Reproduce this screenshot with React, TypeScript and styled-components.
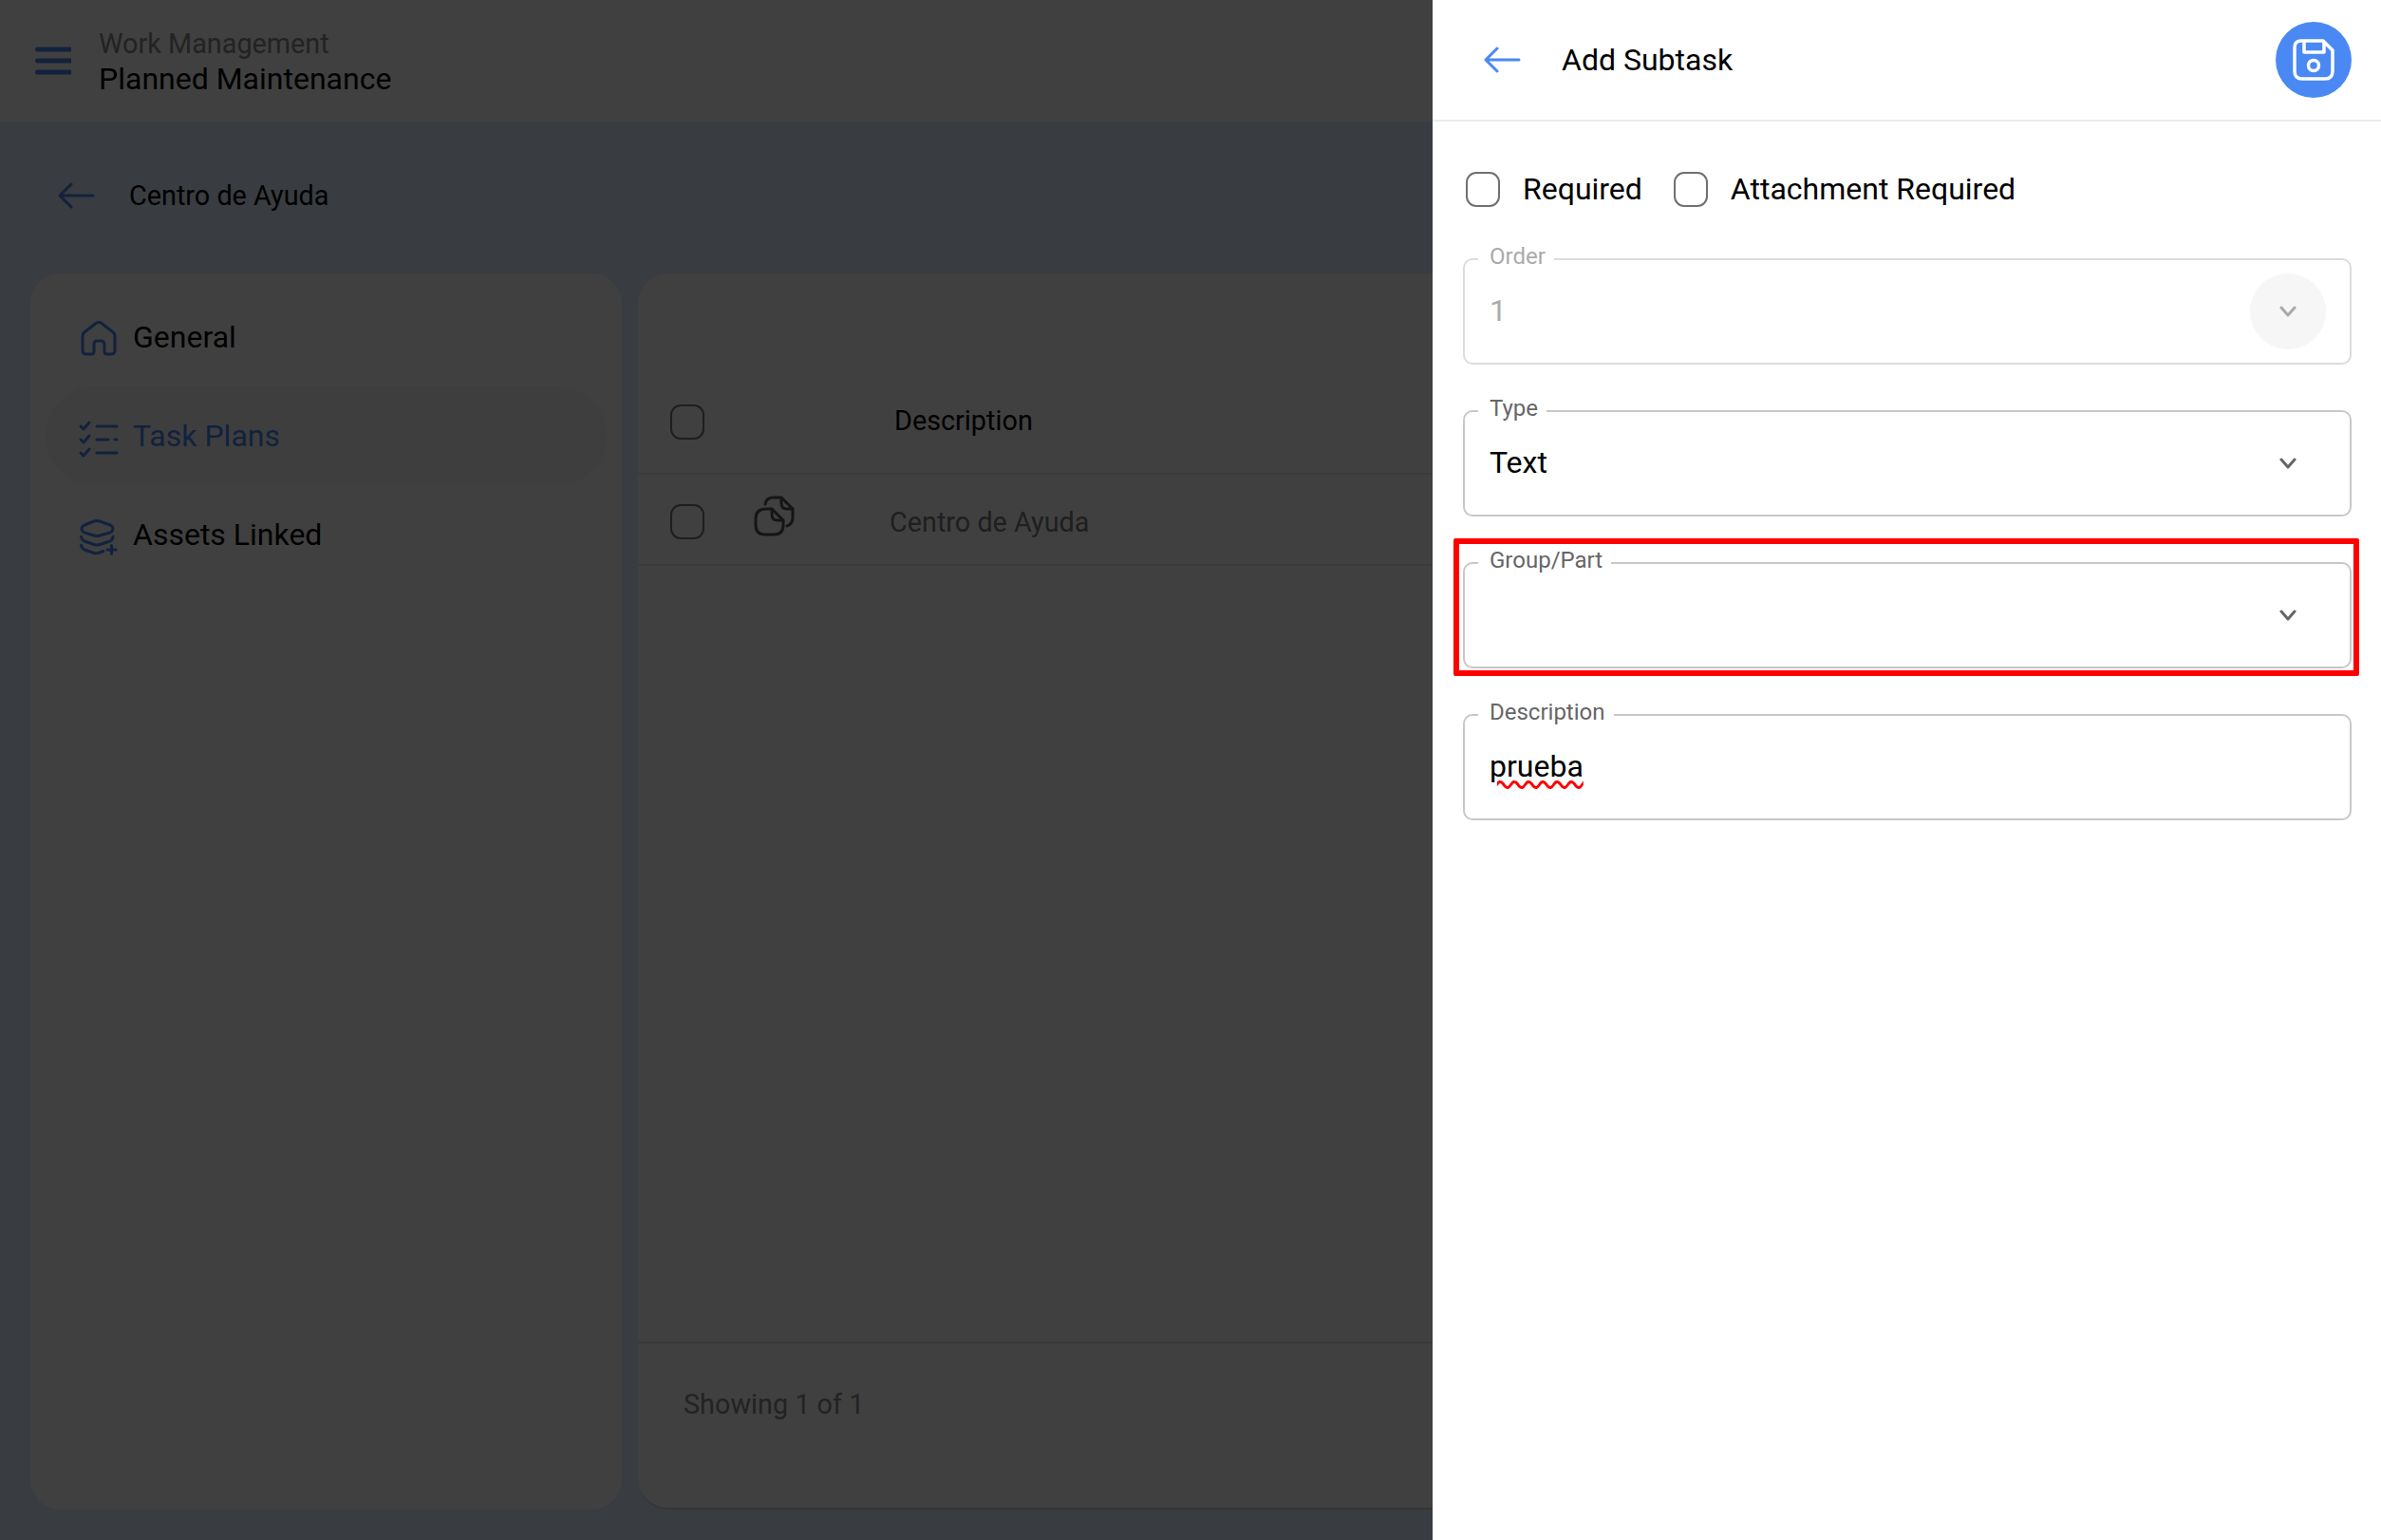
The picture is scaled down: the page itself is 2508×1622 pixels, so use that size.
import React from "react";
import styled, { createGlobalStyle } from "styled-components";

const GlobalStyle = createGlobalStyle`
  html, body { margin: 0; padding: 0; height: 100%; overflow: hidden; }
  body { font-family: Roboto, "Liberation Sans", sans-serif; color: #000; background: #e4f0ff; }
  * { box-sizing: border-box; }
`;

const BLUE = "#4a89f3";

const Page = styled.div`
  width: 2508px;
  height: 1622px;
  display: flex;
  flex-direction: column;
  background: #e4f0ff;
  overflow: hidden;
`;
const TopBar = styled.header`
  height: 128px;
  flex: none;
  background: #fff;
  display: flex;
  align-items: center;
  gap: 29px;
  padding-left: 35px;
  color: ${BLUE};
`;
const Titles = styled.div`
  display: flex;
  flex-direction: column;
  padding-top: 2px;
`;
const Eyebrow = styled.div`
  font-size: 28.8px;
  line-height: 37px;
  color: #8a8a8a;
`;
const PageTitle = styled.div`
  font-size: 32px;
  line-height: 37px;
  color: #000;
`;
const BackRow = styled.div`
  height: 160px;
  flex: none;
  display: flex;
  align-items: center;
  gap: 36px;
  padding: 0 0 4px 60px;
  color: ${BLUE};
`;
const BackLabel = styled.span`
  font-size: 28.8px;
  color: #000;
`;
const Body = styled.main`
  flex: 1;
  min-height: 0;
  display: flex;
  gap: 17px;
  padding: 0 0 32px 32px;
`;
const SideCard = styled.nav`
  width: 623px;
  flex: none;
  background: #fff;
  border-radius: 32px;
  padding: 15px 16px 0;
  display: flex;
  flex-direction: column;
`;
const NavItem = styled.div<{ $active?: boolean }>`
  height: 104px;
  display: flex;
  align-items: center;
  gap: 5px;
  padding-left: 27px;
  border-radius: 52px;
  font-size: 32px;
  color: ${(p) => (p.$active ? BLUE : "#000")};
  background: ${(p) => (p.$active ? "#f7f7f7" : "transparent")};
  svg { color: ${BLUE}; }
`;
const TableCard = styled.section`
  flex: 1;
  min-width: 0;
  background: #fff;
  border-radius: 32px 0 0 32px;
  border-bottom: 2px solid #d4d4d4;
  display: flex;
  flex-direction: column;
`;
const HeadRow = styled.div`
  height: 212px;
  flex: none;
  display: flex;
  align-items: center;
  padding: 103px 0 0 34px;
  border-bottom: 2px solid #ececec;
`;
const HeadLabel = styled.span`
  font-size: 28.8px;
  color: #000;
  margin-left: 200px;
  padding-bottom: 3px;
`;
const DataRow = styled.div`
  height: 96px;
  flex: none;
  display: flex;
  align-items: center;
  padding: 4px 0 0 34px;
  border-bottom: 2px solid #ececec;
  color: #555;
`;
const CopyButton = styled.span`
  display: flex;
  margin-left: 48px;
`;
const CellText = styled.span`
  font-size: 28.8px;
  color: #7c7c7c;
  margin-left: 87px;
  padding-top: 2px;
`;
const TableSpacer = styled.div`
  flex: 1;
`;
const TableFooter = styled.footer`
  height: 175px;
  flex: none;
  display: flex;
  align-items: center;
  border-top: 2px solid #e4e4e4;
  padding: 0 0 45px 48px;
  font-size: 28.8px;
  color: #8a8a8a;
`;
const Scrim = styled.div`
  position: fixed;
  inset: 0;
  background: rgba(0, 0, 0, 0.75);
`;
const Drawer = styled.aside`
  position: fixed;
  top: 0;
  right: 0;
  bottom: 0;
  width: 999px;
  background: #fff;
  display: flex;
  flex-direction: column;
`;
const DrawerHeader = styled.div`
  height: 128px;
  flex: none;
  display: flex;
  align-items: center;
  gap: 43px;
  padding: 0 31px 0 53px;
  border-bottom: 2px solid #ebebeb;
  color: ${BLUE};
`;
const DrawerTitle = styled.h1`
  margin: 0;
  flex: 1;
  font-size: 32px;
  font-weight: 400;
  color: #000;
`;
const SaveButton = styled.button`
  width: 80px;
  height: 80px;
  border: none;
  padding: 0;
  border-radius: 50%;
  background: ${BLUE};
  color: #fff;
  display: flex;
  align-items: center;
  justify-content: center;
`;
const DrawerBody = styled.div`
  padding: 52px 31px 0 32px;
  display: flex;
  flex-direction: column;
`;
const CheckRow = styled.div`
  display: flex;
  align-items: center;
  padding-left: 3px;
  margin-bottom: 54px;
`;
const Check = styled.label`
  display: flex;
  align-items: center;
  gap: 24px;
  margin-right: 33px;
  font-size: 32px;
  color: #000;
`;
const Box = styled.span<{ $tone?: string }>`
  width: 36px;
  height: 37px;
  flex: none;
  border: 2.5px solid ${(p) => p.$tone || "#707070"};
  border-radius: 11px;
`;
const Fields = styled.div`
  display: flex;
  flex-direction: column;
  gap: 48px;
`;
const Field = styled.div<{ $disabled?: boolean; $flagged?: boolean }>`
  position: relative;
  height: 112px;
  display: flex;
  align-items: center;
  justify-content: space-between;
  padding: 0 25px 0 26px;
  border: 2px solid ${(p) => (p.$disabled ? "#dcdcdc" : "#c8c8c8")};
  border-radius: 10px;
  font-size: 32px;
  color: ${(p) => (p.$disabled ? "#aaa" : "#000")};
  ${(p) =>
    p.$flagged &&
    `&::after {
      content: "";
      position: absolute;
      top: -27px;
      right: -10px;
      bottom: -10px;
      left: -12px;
      border: 6px solid #ff0000;
      border-radius: 2px;
      pointer-events: none;
    }`}
`;
const FieldValue = styled.span`
  padding-bottom: 3px;
`;
const FieldLabel = styled.span<{ $disabled?: boolean }>`
  position: absolute;
  top: -19px;
  left: 14px;
  padding: 0 9px 0 12px;
  background: #fff;
  font-size: 24px;
  line-height: 30px;
  color: ${(p) => (p.$disabled ? "#aaa" : "#666")};
`;
const Misspelled = styled.span`
  text-decoration: underline wavy #ff0000 3px;
  text-underline-offset: 4px;
`;
const ChevronWell = styled.span<{ $filled?: boolean }>`
  width: 80px;
  height: 80px;
  flex: none;
  margin-left: auto;
  border-radius: 50%;
  display: flex;
  align-items: center;
  justify-content: center;
  background: ${(p) => (p.$filled ? "#f6f6f6" : "transparent")};
  color: ${(p) => (p.$filled ? "#aaa" : "#666")};
`;

const Hamburger = () => (
  <svg width="40" height="32" viewBox="0 0 40 32" fill="none" stroke="currentColor" strokeWidth="5" strokeLinecap="round">
    <path d="M4.5 4h35M4.5 16h35M4.5 28h35" />
  </svg>
);
const BackArrow = () => (
  <svg width="40" height="28" viewBox="0 0 40 28" fill="none" stroke="currentColor" strokeWidth="3" strokeLinecap="round" strokeLinejoin="round">
    <path d="M38 14H3M15 2 3 14l12 12" />
  </svg>
);
const HomeIcon = () => (
  <svg width="60" height="60" viewBox="0 -5 60 60" fill="none" stroke="currentColor" strokeWidth="3" strokeLinejoin="round">
    <path d="M12 24Q12 21 15 19L26 10.5Q29 8.5 32 10.5L43 19Q46 21 46 24V39Q46 43 42 43H38Q35 43 35 40V33Q35 29 31 29H27Q24 29 24 33V40Q24 43 21 43H16Q12 43 12 39Z" />
  </svg>
);
const TasksIcon = () => (
  <svg width="60" height="60" viewBox="0 -7 60 60" fill="none" stroke="currentColor" strokeWidth="3" strokeLinecap="round" strokeLinejoin="round">
    <path d="M10 13l3 3 6-7M10 27l3 3 6-7M10 41l3 3 6-7M27 13h21M27 27h12M46 27h2M27 41h21" />
  </svg>
);
const LayersIcon = () => (
  <svg width="60" height="60" viewBox="0 -8 60 60" fill="none" stroke="currentColor" strokeWidth="3" strokeLinecap="round" strokeLinejoin="round">
    <path d="M11 16Q11 13.5 14 12L24 8Q27 7 30 8L41 12Q44 13.5 44 16Q44 18.500 41 20L30 23Q27 24 24 23L14 20Q11 18.500 11 16Z" />
    <path d="M10.500 24Q10.500 27 14 29L24 32.500Q27 33.500 30 32.500L41 29Q44 27 44 24" />
    <path d="M10.500 33Q10.500 36 14 38L24 41.500Q27 42 30 41L34 39.500M38 38h9M42.500 33.500v9" />
  </svg>
);
const CopyIcon = () => (
  <svg width="60" height="60" viewBox="0 3 60 60" fill="none" stroke="currentColor" strokeWidth="3" strokeLinecap="round" strokeLinejoin="round">
    <path d="M17 20H23L35 32V37Q35 47 25 47H16Q6 47 6 37V30Q6 20 17 20Z" />
    <path d="M23 20V26Q23 32 29 32H35" />
    <path d="M16 15Q17 8 25 8H33L45 20V29Q45 36 39 38" />
    <path d="M33 8V14Q33 20 39 20H45" />
  </svg>
);
const SaveIcon = () => (
  <svg width="44" height="44" viewBox="0 0 44 44" fill="none" stroke="currentColor" strokeWidth="3.500" strokeLinejoin="round">
    <path d="M9 2H32L42 12V34Q42 42 34 42H10Q2 42 2 34V9Q2 2 9 2Z" />
    <path d="M12 2V14H33V3" />
    <circle cx="22" cy="28" r="5.500" />
  </svg>
);
const Chevron = () => (
  <svg width="20" height="12" viewBox="0 0 20 12" fill="none" stroke="currentColor" strokeWidth="3" strokeLinecap="round" strokeLinejoin="round">
    <path d="M3 2l7 8 7-8" />
  </svg>
);

export default function App() {
  return (
    <>
      <GlobalStyle />
      <Page>
        <TopBar>
          <Hamburger />
          <Titles>
            <Eyebrow>Work Management</Eyebrow>
            <PageTitle>Planned Maintenance</PageTitle>
          </Titles>
        </TopBar>
        <BackRow>
          <BackArrow />
          <BackLabel>Centro de Ayuda</BackLabel>
        </BackRow>
        <Body>
          <SideCard>
            <NavItem><HomeIcon />General</NavItem>
            <NavItem $active><TasksIcon />Task Plans</NavItem>
            <NavItem><LayersIcon />Assets Linked</NavItem>
          </SideCard>
          <TableCard>
            <HeadRow>
              <Box $tone="#777" />
              <HeadLabel>Description</HeadLabel>
            </HeadRow>
            <DataRow>
              <Box $tone="#777" />
              <CopyButton><CopyIcon /></CopyButton>
              <CellText>Centro de Ayuda</CellText>
            </DataRow>
            <TableSpacer />
            <TableFooter>Showing 1 of 1</TableFooter>
          </TableCard>
        </Body>
      </Page>
      <Scrim />
      <Drawer>
        <DrawerHeader>
          <BackArrow />
          <DrawerTitle>Add Subtask</DrawerTitle>
          <SaveButton><SaveIcon /></SaveButton>
        </DrawerHeader>
        <DrawerBody>
          <CheckRow>
            <Check><Box />Required</Check>
            <Check><Box />Attachment Required</Check>
          </CheckRow>
          <Fields>
            <Field $disabled>
              <FieldLabel $disabled>Order</FieldLabel>
              <FieldValue>1</FieldValue>
              <ChevronWell $filled><Chevron /></ChevronWell>
            </Field>
            <Field>
              <FieldLabel>Type</FieldLabel>
              <FieldValue>Text</FieldValue>
              <ChevronWell><Chevron /></ChevronWell>
            </Field>
            <Field $flagged>
              <FieldLabel>Group/Part</FieldLabel>
              <ChevronWell><Chevron /></ChevronWell>
            </Field>
            <Field>
              <FieldLabel>Description</FieldLabel>
              <FieldValue><Misspelled>prueba</Misspelled></FieldValue>
            </Field>
          </Fields>
        </DrawerBody>
      </Drawer>
    </>
  );
}
